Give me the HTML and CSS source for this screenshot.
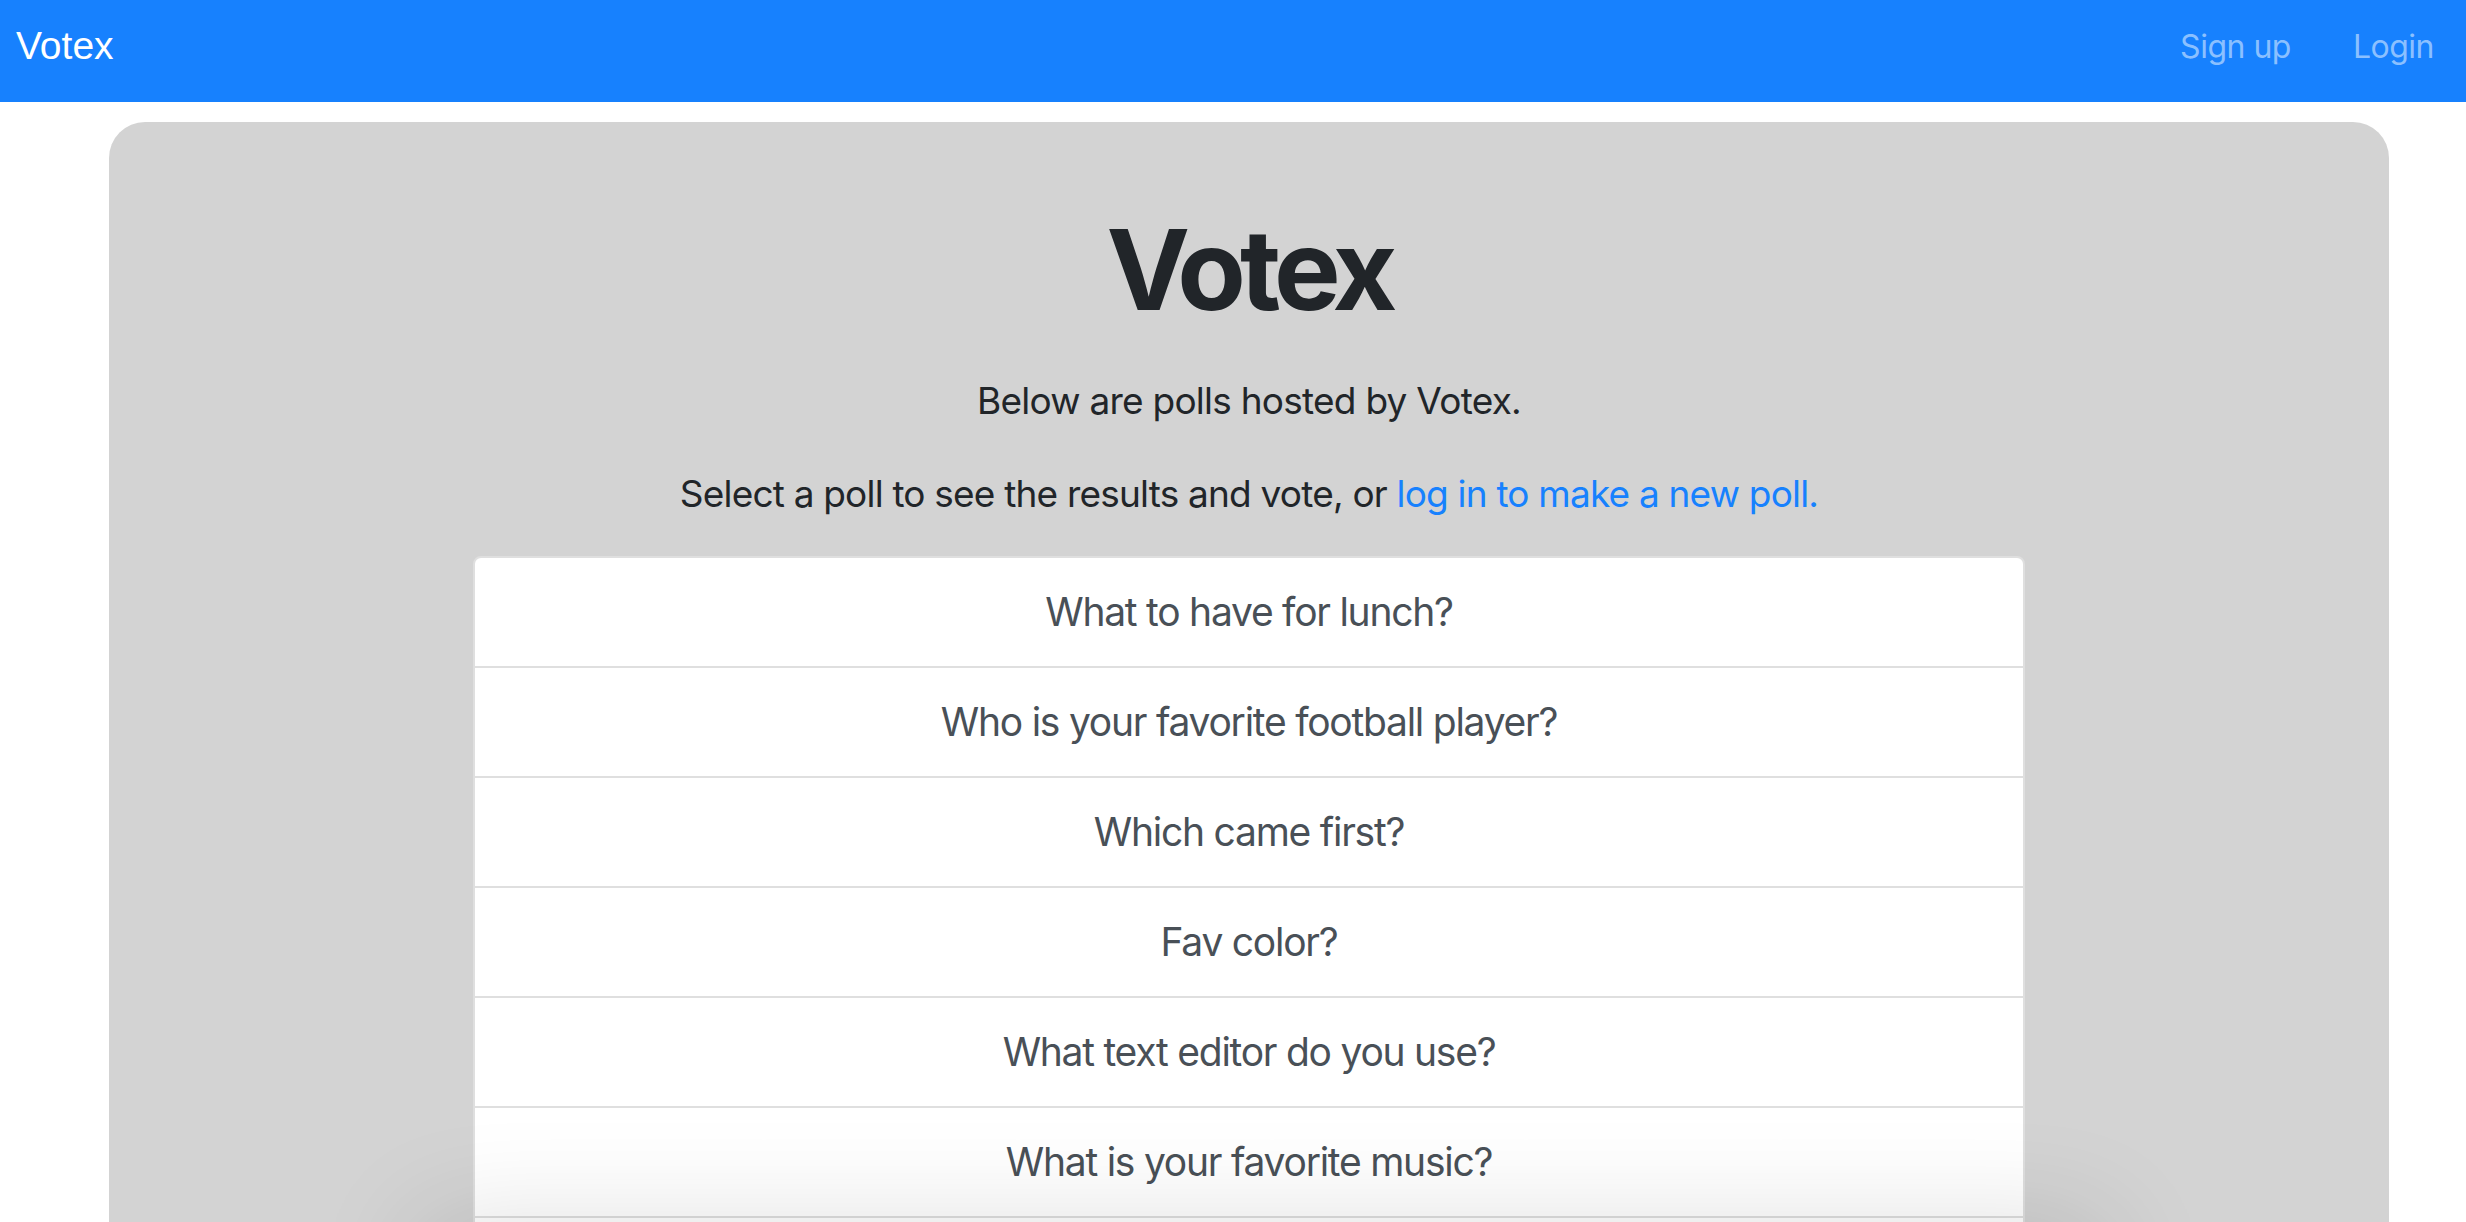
FILE: index.html
```html
<!DOCTYPE html>
<html lang="en">
<head>
<meta charset="utf-8">
<title>Votex</title>
<link rel="stylesheet" href="styles.css">
</head>
<body>
<nav class="navbar">
  <a class="brand" href="#">Votex</a>
  <div class="nav-links">
    <a class="nav-link" href="#">Sign up</a>
    <a class="nav-link" href="#">Login</a>
  </div>
</nav>
<main class="jumbotron">
  <h1 class="title">Votex</h1>
  <p class="lead">Below are polls hosted by Votex.</p>
  <p class="lead lead-second">Select a poll to see the results and vote, or <a class="lead-link" href="#">log in to make a new poll.</a></p>
  <div class="list-group">
    <a class="list-item" href="#">What to have for lunch?</a>
    <a class="list-item" href="#">Who is your favorite football player?</a>
    <a class="list-item" href="#">Which came first?</a>
    <a class="list-item" href="#">Fav color?</a>
    <a class="list-item" href="#">What text editor do you use?</a>
    <a class="list-item" href="#">What is your favorite music?</a>
    <div class="list-item list-item-empty"></div>
  </div>
</main>
<div class="bottom-shade"></div>
</body>
</html>
```

FILE: styles.css
```css
html, body {
  margin: 0;
  padding: 0;
  height: 100%;
  overflow: hidden;
  background: #ffffff;
}

body {
  font-family: Inter, "Noto Sans", "Liberation Sans", sans-serif;
  color: #212529;
}

a {
  text-decoration: none;
}

.navbar {
  height: 102px;
  box-sizing: border-box;
  padding: 0 0 10px 16px;
  background: #1781fe;
  display: flex;
  align-items: center;
  justify-content: space-between;
}

.brand {
  font-family: "Liberation Sans", Arial, sans-serif;
  font-size: 39px;
  color: #ffffff;
}

.nav-links {
  display: flex;
}

.nav-link {
  font-size: 32px;
  letter-spacing: -0.5px;
  color: #8bc0ff;
  padding: 0 32px 0 30px;
}

.jumbotron {
  margin: 20px 77px 0 109px;
  background: #d3d3d3;
  border-radius: 36px;
  padding: 80px 0 200px;
  text-align: center;
  min-height: 1400px;
}

.title {
  margin: 0;
  font-size: 112px;
  line-height: 134px;
  font-weight: 700;
  letter-spacing: -6px;
  color: #212529;
}

.lead {
  margin: 37px 0 0;
  font-size: 37px;
  line-height: 56px;
  font-weight: 400;
  letter-spacing: -0.75px;
  color: #212529;
}

.lead-second {
  margin-top: 37px;
  letter-spacing: -0.8px;
}

.lead-link {
  color: #1781fe;
}

.list-group {
  margin: 34px auto 0;
  width: 1552px;
  box-sizing: border-box;
  border: 2px solid #dfdfdf;
  border-radius: 8px;
  background: #ffffff;
  display: flex;
  flex-direction: column;
}

.list-item {
  display: block;
  padding: 24px 40px;
  font-size: 39px;
  line-height: 60px;
  letter-spacing: -1.25px;
  color: #495057;
  border-bottom: 2px solid #dfdfdf;
}

.list-item-empty {
  height: 60px;
}

.list-item:last-child {
  border-bottom: none;
}

.bottom-shade {
  position: fixed;
  left: 420px;
  right: 360px;
  bottom: -200px;
  height: 200px;
  box-shadow: 0 0 110px 0 rgba(0, 0, 0, 0.13);
  pointer-events: none;
}
```
